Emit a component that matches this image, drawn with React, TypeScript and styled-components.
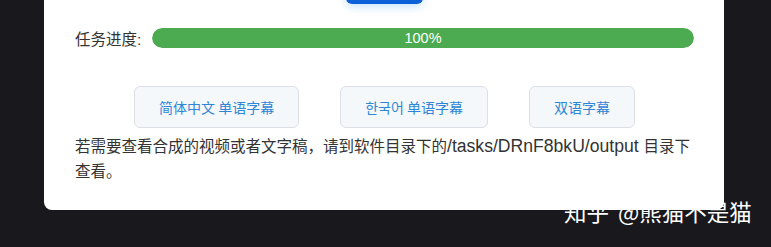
import React from 'react';
import styled, { createGlobalStyle } from 'styled-components';

const GlobalStyle = createGlobalStyle`
  html, body {
    margin: 0;
    padding: 0;
    background: #18181d;
    width: 771px;
    height: 247px;
    overflow: hidden;
  }
  body {
    font-family: "Liberation Sans", "Noto Sans CJK SC", sans-serif;
  }
`;

const Page = styled.div`
  position: relative;
  width: 771px;
  height: 247px;
  padding-left: 44px;
  box-sizing: border-box;
`;

const Card = styled.div`
  width: 680px;
  height: 210px;
  background: #ffffff;
  border-radius: 0 0 8px 8px;
  padding: 0 30px 0 31px;
  box-sizing: border-box;
  display: flex;
  flex-direction: column;
  overflow: hidden;
`;

const TopAction = styled.div`
  display: flex;
  justify-content: center;
`;

const StartButton = styled.div`
  width: 77px;
  height: 34px;
  margin-top: -30px;
  border-radius: 6px;
  background: linear-gradient(180deg, #1a73e8 0%, #0b5ed7 100%);
  box-shadow: 0 3px 8px rgba(64, 158, 255, 0.28);
`;

const ProgressRow = styled.div`
  display: flex;
  align-items: center;
  margin-top: 24px;
  height: 20px;
`;

const Label = styled.span`
  font-size: 15.5px;
  color: #333;
  width: 77px;
  flex-shrink: 0;
  white-space: nowrap;
`;

const Track = styled.div`
  flex: 1;
  height: 20px;
  border-radius: 10px;
  background: #ebeef5;
  overflow: hidden;
`;

const Fill = styled.div`
  height: 100%;
  border-radius: 10px;
  background: #4caa50;
  color: #fff;
  font-size: 14.5px;
  display: flex;
  align-items: center;
  justify-content: center;
`;

const ButtonRow = styled.div`
  display: flex;
  justify-content: center;
  gap: 41px;
  margin-top: 38px;
`;

const SubButton = styled.button`
  height: 42px;
  padding: 0 24px;
  border: 1px solid #dcdfe6;
  border-radius: 6px;
  background: #f5f8fb;
  color: #2f86d6;
  font-family: "Noto Sans CJK SC", "Noto Sans CJK KR", sans-serif;
  font-size: 14px;
  cursor: pointer;
`;

const Note = styled.p`
  margin: 6px 0 0;
  font-size: 15.5px;
  line-height: 25px;
  color: #333;
`;

const PathText = styled.span`
  font-family: "Liberation Sans", Arial, sans-serif;
  font-size: 17.6px;
`;

const Watermark = styled.div`
  position: absolute;
  left: 564px;
  top: 198px;
  font-family: "Noto Sans CJK SC", sans-serif;
  font-size: 22.5px;
  line-height: 26px;
  word-spacing: 4px;
  color: #ffffff;
  white-space: nowrap;
`;

const progress = 100;

export default function App() {
  return (
    <>
      <GlobalStyle />
      <Page>
        <Card>
          <TopAction>
            <StartButton />
          </TopAction>
          <ProgressRow>
            <Label>任务进度:</Label>
            <Track>
              <Fill style={{ width: `${progress}%` }}>{progress}%</Fill>
            </Track>
          </ProgressRow>
          <ButtonRow>
            <SubButton>简体中文 单语字幕</SubButton>
            <SubButton>한국어 单语字幕</SubButton>
            <SubButton>双语字幕</SubButton>
          </ButtonRow>
          <Note>
            若需要查看合成的视频或者文字稿，请到软件目录下的
            <PathText>/tasks/DRnF8bkU/output </PathText>
            目录下查看。
          </Note>
        </Card>
        <Watermark>知乎 @熊猫不是猫</Watermark>
      </Page>
    </>
  );
}
